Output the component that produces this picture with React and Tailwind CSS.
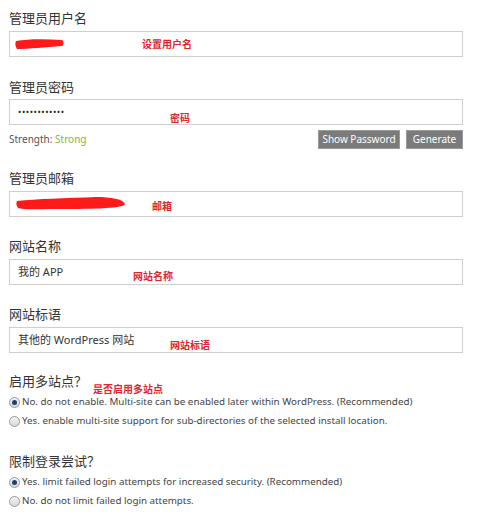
const font = { fontFamily: '"Noto Sans", "Noto Sans CJK SC", sans-serif' };

const Label = ({ children, className = "" }) => (
  <div className={`text-[13px] leading-[20px] text-[#333] ${className}`}>{children}</div>
);

const Box = ({ children, className = "" }) => (
  <div className={`relative h-[26px] border border-[#cfcfcf] bg-white flex items-center pl-[8px] text-[11px] text-[#333] ${className}`}>
    {children}
  </div>
);

const Note = ({ children, className = "" }) => (
  <span className={`absolute text-[10px] leading-none font-bold text-[#e0262b] ${className}`}>{children}</span>
);

const Radio = ({ checked, children }) => (
  <div className="flex items-center h-[19px] text-[9.8px] text-[#444]">
    <span className="relative w-[11px] h-[11px] rounded-full border border-[#9a9a9a] bg-gradient-to-b from-[#f4f4f4] to-[#d8d8d8] mr-[2px] shrink-0 flex items-center justify-center">
      {checked && <span className="w-[5px] h-[5px] rounded-full bg-[#1d3f6e]" />}
    </span>
    <span>{children}</span>
  </div>
);

export default function App() {
  return (
    <div className="w-[500px] h-[512px] bg-white overflow-hidden relative" style={font}>
      <div className="pl-[9px] w-[463px] pt-[8px]">
        <Label>管理员用户名</Label>
        <Box className="mt-[3px]">
          <svg className="absolute left-[5px] top-[7px]" width="50" height="10" viewBox="0 0 50 10">
            <path d="M1 2 C12 0, 30 0, 47 1 C49 2, 49 6, 47 7 C30 8, 14 10, 2 10 C0 7, 0 4, 1 2 Z" fill="#ff1a1a" />
          </svg>
          <Note className="left-[132px] top-[7px]">设置用户名</Note>
        </Box>

        <Label className="mt-[20px]">管理员密码</Label>
        <Box className="mt-[2px]">
          <span className="tracking-[0.5px] text-[9px] text-[#222]">••••••••••••</span>
          <Note className="left-[160px] top-[13px]">密码</Note>
        </Box>
        <div className="flex items-center h-[19px] mt-[5px]">
          <span className="text-[10px] text-[#555]">Strength: <span className="text-[#8ab43a]">Strong</span></span>
          <div className="ml-auto flex gap-[6px]">
            <span className="w-[82px] h-[19px] bg-[#7b7b7b] border border-[#9a9a9a] text-white text-[10px] flex items-center justify-center">Show Password</span>
            <span className="w-[57px] h-[19px] bg-[#7b7b7b] border border-[#9a9a9a] text-white text-[10px] flex items-center justify-center">Generate</span>
          </div>
        </div>

        <Label className="mt-[19px]">管理员邮箱</Label>
        <Box className="mt-[3px]">
          <svg className="absolute left-[6px] top-[5px]" width="110" height="14" viewBox="0 0 110 14">
            <path d="M1 4 C20 2, 50 1, 80 0 C95 0, 107 2, 109 7 C107 12, 70 12, 40 12 C20 12, 8 13, 2 11 C0 8, 0 6, 1 4 Z" fill="#ff1a1a" />
          </svg>
          <Note className="left-[142px] top-[9px]">邮箱</Note>
        </Box>

        <Label className="mt-[19px]">网站名称</Label>
        <Box className="mt-[3px]">
          <span>我的 APP</span>
          <Note className="left-[123px] top-[11px]">网站名称</Note>
        </Box>

        <Label className="mt-[19px]">网站标语</Label>
        <Box className="mt-[3px]">
          <span>其他的 WordPress 网站</span>
          <Note className="left-[160px] top-[12px]">网站标语</Note>
        </Box>

        <Label className="mt-[18px] relative">
          启用多站点？
          <Note className="left-[84px] top-[13px]">是否启用多站点</Note>
        </Label>
        <div className="mt-[2px]">
          <Radio checked>No. do not enable. Multi-site can be enabled later within WordPress. (Recommended)</Radio>
          <Radio>Yes. enable multi-site support for sub-directories of the selected install location.</Radio>
        </div>

        <Label className="mt-[20px]">限制登录尝试？</Label>
        <div className="mt-[2px]">
          <Radio checked>Yes. limit failed login attempts for increased security. (Recommended)</Radio>
          <Radio>No. do not limit failed login attempts.</Radio>
        </div>
      </div>
    </div>
  );
}
